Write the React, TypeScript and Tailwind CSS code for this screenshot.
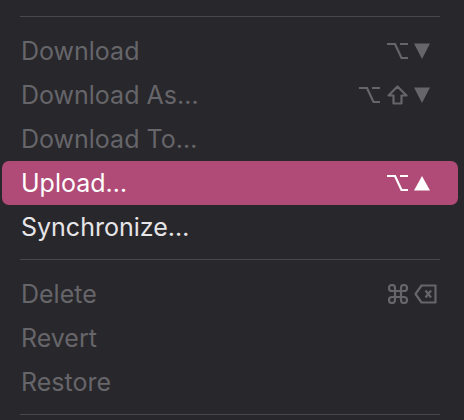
import type { ReactNode } from "react";

const OptionKey = () => (
  <svg width="21" height="18" viewBox="0 0 21 18" fill="none" stroke="currentColor" strokeWidth="2.2">
    <path d="M0 2 H8 L14.5 16 H21 M13 2 H21" />
  </svg>
);

const ShiftKey = () => (
  <svg width="21" height="20" viewBox="0 0 21 20" fill="none" stroke="currentColor" strokeWidth="2.2" strokeLinejoin="round">
    <path d="M10.5 1.5 L19.5 10.5 H14.5 V18.5 H6.5 V10.5 H1.5 Z" />
  </svg>
);

const CommandKey = () => (
  <svg width="20" height="20" viewBox="0 0 20 20" fill="none" stroke="currentColor" strokeWidth="2.2">
    <path d="M7 16 V4 A3 3 0 1 0 4 7 H16 A3 3 0 1 0 13 4 V16 A3 3 0 1 0 16 13 H4 A3 3 0 1 0 7 16 Z" />
  </svg>
);

const DownArrow = () => (
  <svg width="16" height="16" viewBox="0 0 16 16" fill="currentColor">
    <path d="M0 0.5 H16 L8 16 Z" />
  </svg>
);

const UpArrow = () => (
  <svg width="16" height="15" viewBox="0 0 16 15" fill="currentColor">
    <path d="M8 0 L16 14.5 H0 Z" />
  </svg>
);

const DeleteKey = () => (
  <svg width="23" height="20" viewBox="0 0 23 20" fill="none" stroke="currentColor" strokeWidth="2.2" strokeLinejoin="round">
    <path d="M7.5 1.5 H21.5 V18.5 H7.5 L1.5 10 Z" />
    <path d="M11.5 6.5 L17 13.5 M17 6.5 L11.5 13.5" />
  </svg>
);

type Item = {
  label: string;
  mods?: ReactNode[];
  keyGlyph?: ReactNode;
  disabled?: boolean;
  active?: boolean;
};

function MenuRow({ label, mods, keyGlyph, disabled, active }: Item) {
  const tone = active
    ? "bg-[#b04a77] text-white"
    : disabled
      ? "text-[#66656a]"
      : "text-[#e6e5e8]";

  return (
    <div className={`flex items-center h-[44px] rounded-[7px] pl-[19px] ${tone}`}>
      <span className="flex-1 text-[25px] leading-none">{label}</span>
      {keyGlyph && (
        <div className="flex items-center">
          <div className="flex items-center gap-[7px]">{mods}</div>
          <div className="w-[50px] pl-[6px] flex items-center">{keyGlyph}</div>
        </div>
      )}
    </div>
  );
}

const Separator = () => <div className="h-px bg-[#48474c] mx-[18px] mt-[10px] mb-[12px]" />;

export default function App() {
  return (
    <div
      className="w-[464px] h-[420px] bg-[#28272b] overflow-hidden pl-[2px] pr-[6px] pt-[6px]"
      style={{ fontFamily: "Inter, 'Noto Sans', sans-serif" }}
    >
      <Separator />
      <MenuRow label="Download" disabled mods={[<OptionKey key="o" />]} keyGlyph={<DownArrow />} />
      <MenuRow
        label="Download As…"
        disabled
        mods={[<OptionKey key="o" />, <ShiftKey key="s" />]}
        keyGlyph={<DownArrow />}
      />
      <MenuRow label="Download To…" disabled />
      <MenuRow label="Upload…" active mods={[<OptionKey key="o" />]} keyGlyph={<UpArrow />} />
      <MenuRow label="Synchronize…" />
      <Separator />
      <MenuRow label="Delete" disabled mods={[<CommandKey key="c" />]} keyGlyph={<DeleteKey />} />
      <MenuRow label="Revert" disabled />
      <MenuRow label="Restore" disabled />
      <Separator />
    </div>
  );
}
